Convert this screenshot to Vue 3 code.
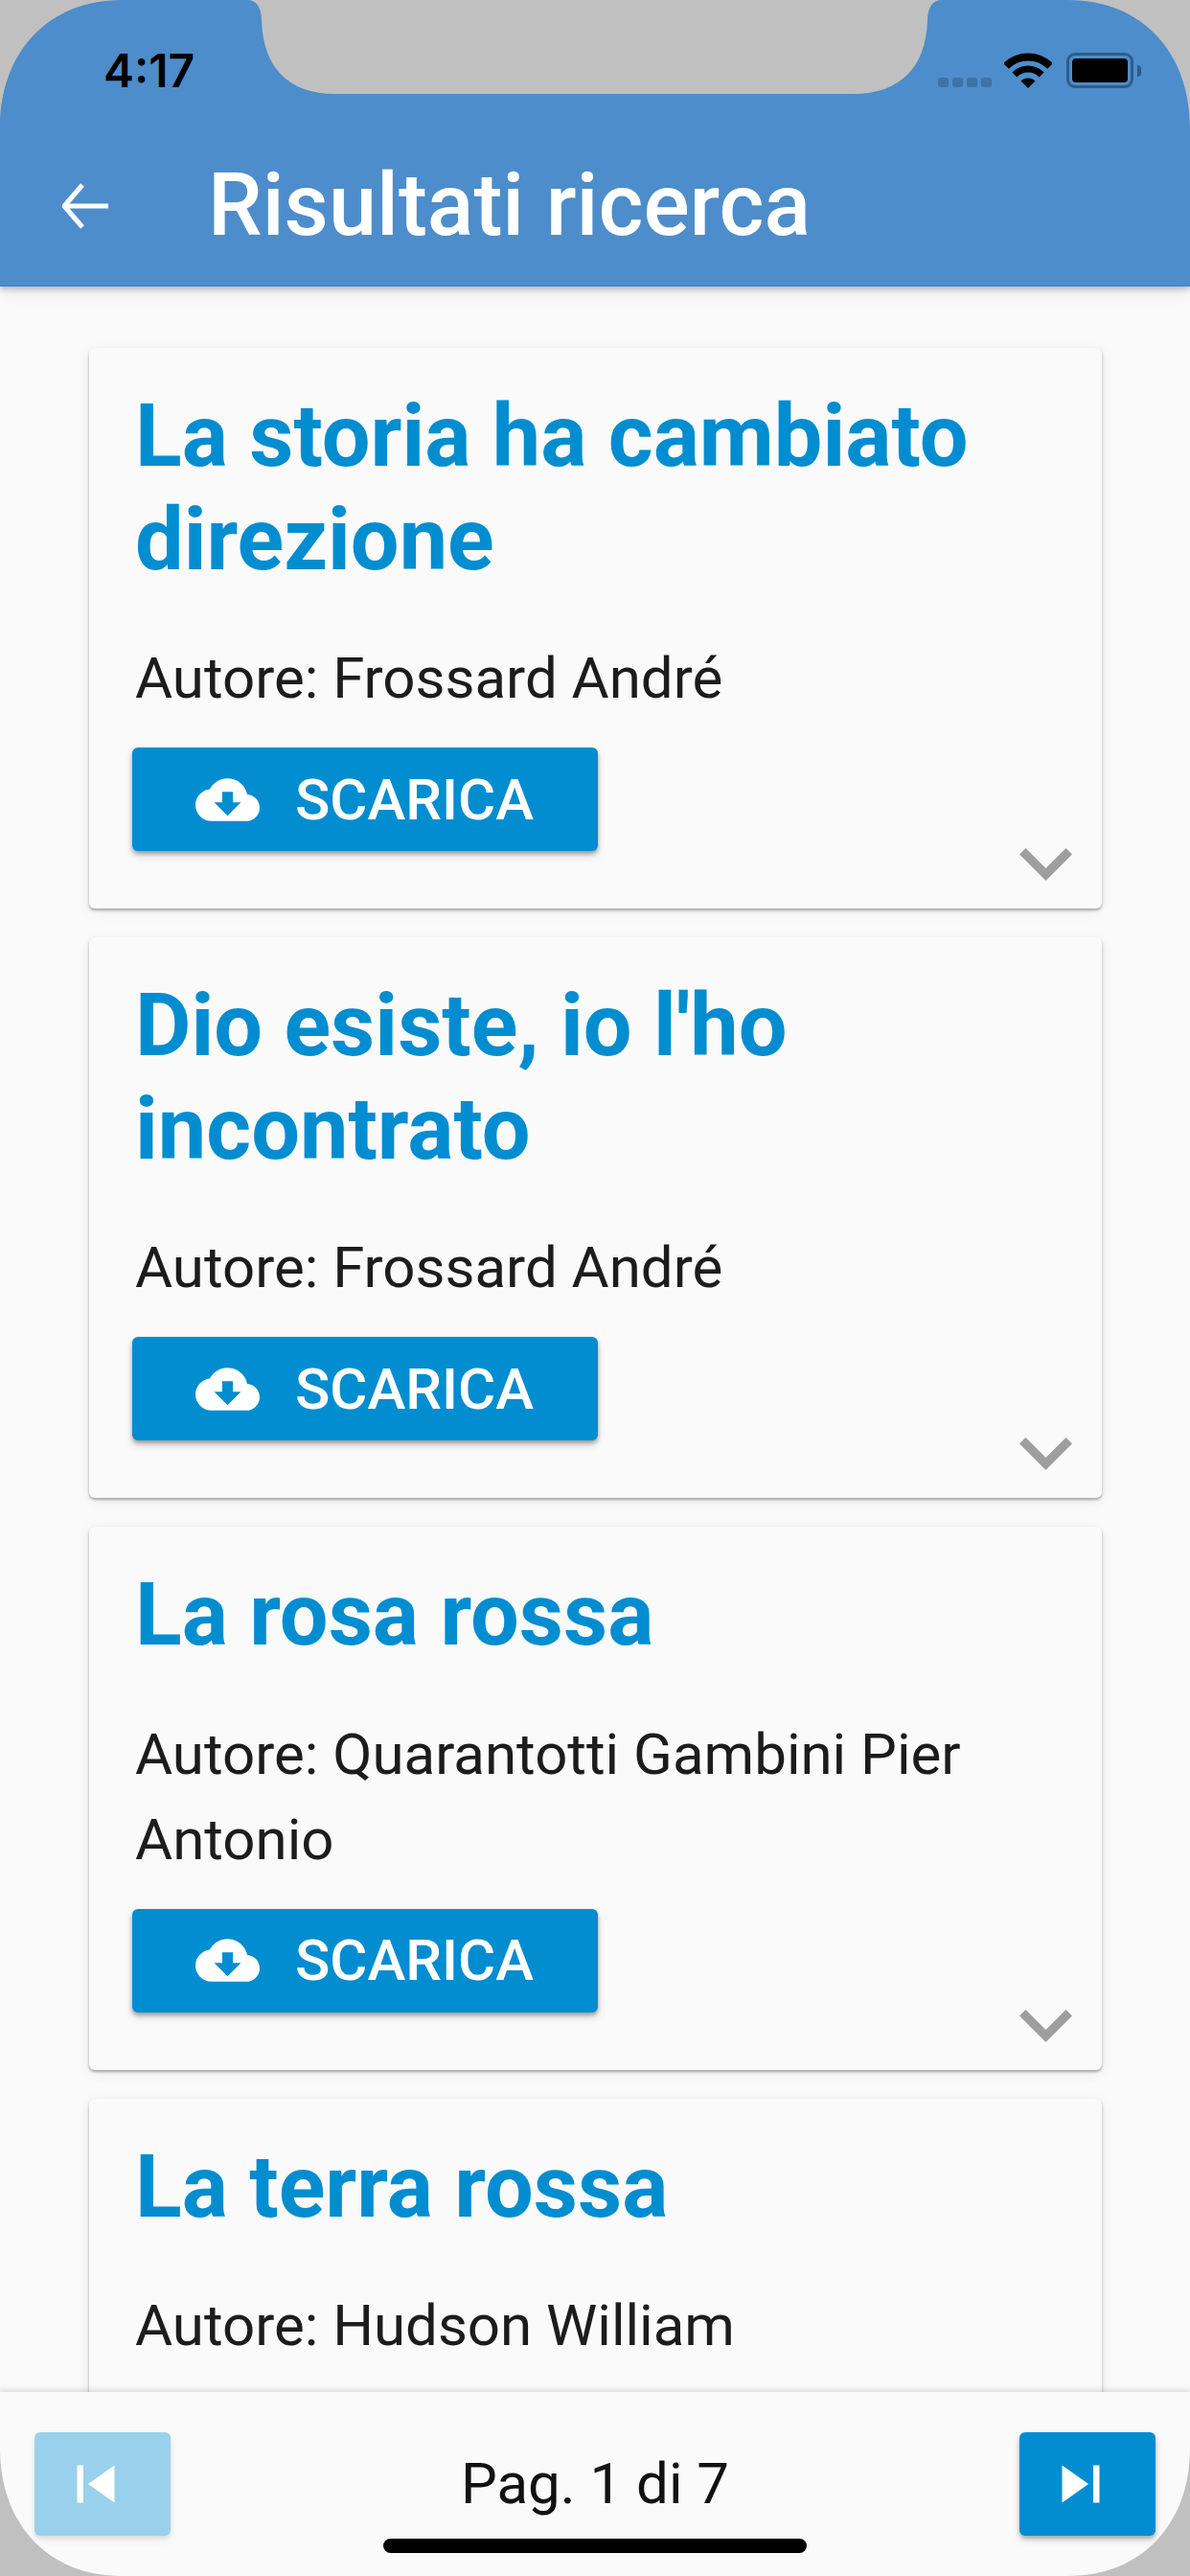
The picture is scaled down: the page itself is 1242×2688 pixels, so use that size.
<script setup>
const books = [
  { title: 'La storia ha cambiato direzione', author: 'Frossard André' },
  { title: "Dio esiste, io l'ho incontrato", author: 'Frossard André' },
  { title: 'La rosa rossa', author: 'Quarantotti Gambini Pier Antonio' },
  { title: 'La terra rossa', author: 'Hudson William' }
]
</script>

<template>
  <div class="page">
    <header class="header">
      <div class="status">
        <span class="time">4:17</span>
        <div class="status-icons">
          <div class="signal"><i></i><i></i><i></i><i></i></div>
          <svg class="wifi" width="50" height="37" viewBox="0 0 50 37">
            <path d="M25 37 L17.5 29.5 A10.6 10.6 0 0 1 32.5 29.5 Z" fill="#000" />
            <path d="M10.9 22.9 A20 20 0 0 1 39.1 22.9" fill="none" stroke="#000" stroke-width="7" />
            <path d="M2 14 A32.5 32.5 0 0 1 48 14" fill="none" stroke="#000" stroke-width="8" />
          </svg>
          <div class="battery"><div class="battery-fill"></div></div>
          <div class="battery-nub"></div>
        </div>
      </div>
      <div class="toolbar">
        <svg class="back" width="48" height="48" viewBox="0 0 48 48">
          <path d="M21 2 L2 24 L21 46 M2 24 H48" fill="none" stroke="#fff" stroke-width="5" />
        </svg>
        <h1 class="page-title">Risultati ricerca</h1>
      </div>
    </header>

    <main class="list">
      <article v-for="book in books" :key="book.title" class="card">
        <h2 class="title">{{ book.title }}</h2>
        <p class="author">Autore: {{ book.author }}</p>
        <button class="download" type="button">
          <svg width="67" height="67" viewBox="0 0 24 24">
            <path fill="#fff" d="M19.35 10.04C18.67 6.59 15.64 4 12 4 9.11 4 6.6 5.64 5.35 8.04 2.34 8.36 0 10.91 0 14c0 3.31 2.69 6 6 6h13c2.76 0 5-2.24 5-5 0-2.64-2.05-4.78-4.65-4.96zM17 13l-5 5-5-5h3V9h4v4h3z" />
          </svg>
          <span>SCARICA</span>
        </button>
        <svg class="chevron" width="55" height="34" viewBox="6 8.59 12 7.41" preserveAspectRatio="none">
          <path fill="#9e9e9e" d="M16.59 8.59L12 13.17 7.41 8.59 6 10l6 6 6-6z" />
        </svg>
      </article>
    </main>

    <footer class="footer">
      <button class="nav disabled" type="button">
        <svg width="78" height="78" viewBox="0 0 24 24"><path fill="#fff" d="M6 6h2v12H6zm3.5 6l8.5 6V6z" /></svg>
      </button>
      <span class="pager">Pag. 1 di 7</span>
      <button class="nav" type="button">
        <svg width="78" height="78" viewBox="0 0 24 24"><path fill="#fff" d="M6 18l8.5-6L6 6v12zM16 6v12h2V6h-2z" /></svg>
      </button>
      <div class="home"></div>
    </footer>

    <svg class="bezel" width="1242" height="2688" viewBox="0 0 1242 2688">
      <path fill="#c0c0c0" fill-rule="evenodd" d="M0 0H1242V2688H0Z M0 133 C0 55 50 0 127 0 H258 C268 0 273 8 273 22 C275 70 300 98 350 98 H890 C940 98 966 70 968 22 C968 8 973 0 983 0 H1115 C1192 0 1242 55 1242 133 V2555 C1242 2633 1192 2688 1115 2688 H127 C50 2688 0 2633 0 2555 Z" />
    </svg>
  </div>
</template>

<style>
html, body { margin: 0; padding: 0; background: #fafafa; }
</style>

<style scoped>
.page {
  position: relative;
  width: 1242px;
  height: 2688px;
  display: flex;
  flex-direction: column;
  overflow: hidden;
  background: #fafafa;
  font-family: Roboto, "Noto Sans", sans-serif;
}
.header {
  flex: none;
  height: 299px;
  box-sizing: border-box;
  background: #4d8dcb;
  border-bottom: 1px solid #3f84cb;
  box-shadow: 0 3px 6px rgba(0, 0, 0, 0.22), 0 6px 16px rgba(0, 0, 0, 0.08);
  position: relative;
  z-index: 2;
}
.status {
  height: 131px;
  box-sizing: border-box;
  padding: 45px 51px 0 108px;
  display: flex;
  justify-content: space-between;
  align-items: flex-start;
}
.time {
  font-family: Inter, sans-serif;
  font-weight: 600;
  font-size: 48px;
  line-height: 58px;
  color: #000;
}
.status-icons {
  display: flex;
  align-items: center;
  height: 37px;
  margin-top: 10px;
}
.signal {
  display: flex;
  gap: 4px;
  align-self: flex-end;
  margin-right: 13px;
  margin-bottom: 1px;
}
.signal i {
  width: 11px;
  height: 10px;
  border-radius: 3px;
  background: #3f72a5;
}
.wifi { margin-right: 15px; }
.battery {
  width: 70px;
  height: 37px;
  box-sizing: border-box;
  border: 3px solid #2f5c8a;
  border-radius: 9px;
  padding: 3px;
}
.battery-fill {
  width: 100%;
  height: 100%;
  background: #000;
  border-radius: 4px;
}
.battery-nub {
  width: 4px;
  height: 12px;
  margin-left: 4px;
  background: #2f5c8a;
  border-radius: 0 6px 6px 0;
}
.toolbar {
  height: 167px;
  display: flex;
  align-items: center;
  padding-left: 65px;
  gap: 104px;
}
.back { flex: none; margin-top: 1px; }
.page-title {
  margin: 0;
  font-size: 90px;
  line-height: 105px;
  font-weight: 500;
  color: #fff;
}
.list {
  flex: 1;
  min-height: 0;
  overflow: hidden;
  padding: 64px 92px 0 93px;
  display: flex;
  flex-direction: column;
  gap: 30px;
}
.card {
  flex: none;
  position: relative;
  background: #fafafa;
  border-radius: 6px;
  padding: 39px 49px 60px 48px;
  box-shadow: 0 2px 3px rgba(0, 0, 0, 0.32), 0 3px 14px rgba(0, 0, 0, 0.07);
}
.title {
  margin: 0;
  font-size: 90px;
  line-height: 107.5px;
  font-weight: 700;
  color: #028dd0;
}
.author {
  margin: 46px 0 28px;
  font-size: 60px;
  line-height: 89px;
  color: #1c1c1c;
}
.download {
  width: 486px;
  height: 108px;
  margin-left: -3px;
  padding: 0 0 0 66px;
  display: flex;
  align-items: center;
  gap: 37px;
  border: 0;
  border-radius: 6px;
  background: #028dd0;
  box-shadow: 0 3px 4px rgba(0, 0, 0, 0.3), 0 5px 10px rgba(0, 0, 0, 0.12);
  color: #fff;
  font-family: inherit;
  font-size: 60px;
  font-weight: 500;
}
.chevron {
  position: absolute;
  right: 31px;
  bottom: 29px;
}
.footer {
  flex: none;
  position: relative;
  z-index: 2;
  height: 192px;
  box-sizing: border-box;
  padding: 42px 36px 0;
  background: #fafafa;
  display: flex;
  justify-content: space-between;
  align-items: flex-start;
  box-shadow: 0 -2px 6px rgba(0, 0, 0, 0.14);
}
.nav {
  width: 142px;
  height: 108px;
  padding: 0 14px 0 0;
  border: 0;
  border-radius: 6px;
  background: #028dd0;
  display: flex;
  align-items: center;
  justify-content: center;
  box-shadow: 0 3px 4px rgba(0, 0, 0, 0.25), 0 5px 10px rgba(0, 0, 0, 0.1);
}
.nav.disabled {
  background: #99d1ec;
  box-shadow: 0 3px 4px rgba(0, 0, 0, 0.08), 0 5px 10px rgba(0, 0, 0, 0.05);
}
.pager {
  font-size: 60px;
  line-height: 108px;
  color: #111;
}
.home {
  position: absolute;
  left: 400px;
  top: 153px;
  width: 442px;
  height: 15px;
  border-radius: 8px;
  background: #000;
}
.bezel {
  position: absolute;
  left: 0;
  top: 0;
  z-index: 3;
  pointer-events: none;
}
</style>
